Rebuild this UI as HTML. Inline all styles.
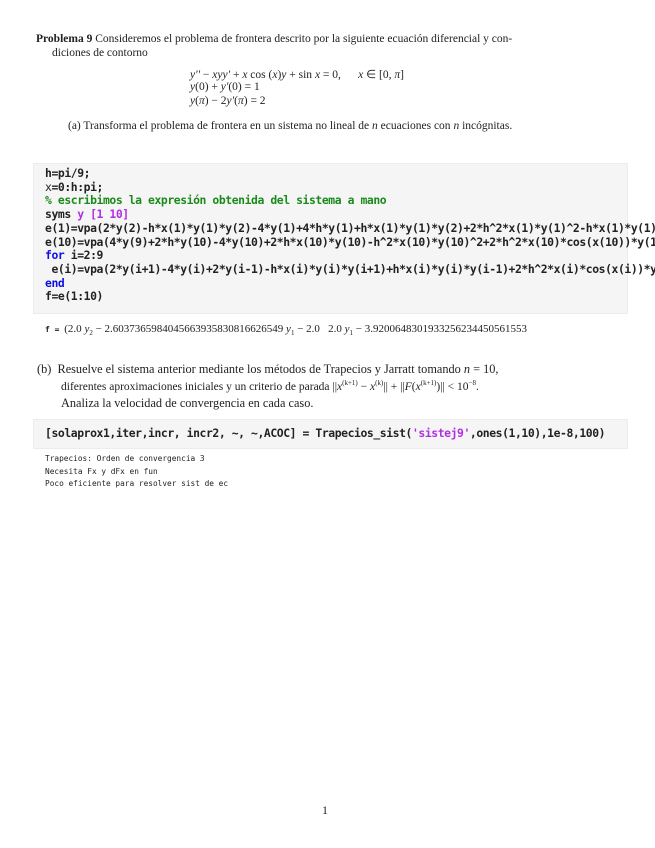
<!DOCTYPE html>
<html><head><meta charset="utf-8"><style>
body{margin:0;width:655px;height:848px;background:#fff;position:relative;overflow:hidden;font-family:"Liberation Serif",serif;color:#222}
.a{position:absolute;white-space:nowrap}
.s{font-size:11.5px}
.box{position:absolute;background:#f5f5f5;border:1px solid #ececec}
.c{font-family:"DejaVu Sans Mono","Liberation Mono",monospace;font-weight:bold;font-size:11.4px;color:#222;letter-spacing:-0.42px}
.o{font-family:"DejaVu Sans Mono",monospace;font-size:7.8px;color:#222}
.g{color:#1a8a1a}.p{color:#b030e0}.b{color:#1010e0}
i{font-style:italic}
</style></head><body>
<div class="a s" style="left:36px;top:33px"><b>Problema 9</b> Consideremos el problema de frontera descrito por la siguiente ecuación diferencial y con-</div>
<div class="a s" style="left:52px;top:47px">diciones de contorno</div>
<div class="a s" style="left:190px;top:67px"><i>y''</i> − <i>xyy'</i> + <i>x</i> cos (<i>x</i>)<i>y</i> + sin <i>x</i> = 0, &nbsp;&nbsp;&nbsp;&nbsp;&nbsp;<i>x</i> ∈ [0, <i>π</i>]</div>
<div class="a s" style="left:190px;top:81px"><i>y</i>(0) + <i>y'</i>(0) = 1</div>
<div class="a s" style="left:190px;top:95px"><i>y</i>(<i>π</i>) − 2<i>y'</i>(<i>π</i>) = 2</div>
<div class="a s" style="left:68px;top:120px">(a) Transforma el problema de frontera en un sistema no lineal de <i>n</i> ecuaciones con <i>n</i> incógnitas.</div>

<div class="box" style="left:33px;top:163px;width:593px;height:149px"></div>
<div class="a c" style="left:45px;top:167px;line-height:13.7px">h=pi/9;<br><span style="font-weight:normal">x</span>=0:h:pi;<br><span class="g">% escribimos la expresión obtenida del sistema a mano</span><br>syms <span class="p">y [1 10]</span><br>e(1)=vpa(2*y(2)-h*x(1)*y(1)*y(2)-4*y(1)+4*h*y(1)+h*x(1)*y(1)*y(2)+2*h^2*x(1)*y(1)^2-h*x(1)*y(1)<br>e(10)=vpa(4*y(9)+2*h*y(10)-4*y(10)+2*h*x(10)*y(10)-h^2*x(10)*y(10)^2+2*h^2*x(10)*cos(x(10))*y(1<br><span class="b">for</span> i=2:9<br>&nbsp;e(i)=vpa(2*y(i+1)-4*y(i)+2*y(i-1)-h*x(i)*y(i)*y(i+1)+h*x(i)*y(i)*y(i-1)+2*h^2*x(i)*cos(x(i))*y<br><span class="b">end</span><br>f=e(1:10)</div>

<div class="a" style="left:45px;top:323px;font-size:11px"><span class="o" style="font-weight:bold;font-size:8px">f = </span> (2.0 <i>y</i><sub style="font-size:7px">2</sub> − 2.6037365984045663935830816626549 <i>y</i><sub style="font-size:7px">1</sub> − 2.0 &nbsp;&nbsp;2.0 <i>y</i><sub style="font-size:7px">1</sub> − 3.9200648301933256234450561553</div>

<div class="a" style="left:37px;top:362px;font-size:12.3px">(b) &nbsp;Resuelve el sistema anterior mediante los métodos de Trapecios y Jarratt tomando <i>n</i> = 10,</div>
<div class="a s" style="left:61px;top:379px">diferentes aproximaciones iniciales y un criterio de parada ||<i>x</i><sup style="font-size:7px">(k+1)</sup> − <i>x</i><sup style="font-size:7px">(k)</sup>|| + ||<i>F</i>(<i>x</i><sup style="font-size:7px">(k+1)</sup>)|| &lt; 10<sup style="font-size:7px">−8</sup>.</div>
<div class="a" style="left:61px;top:396px;font-size:12.3px">Analiza la velocidad de convergencia en cada caso.</div>

<div class="box" style="left:33px;top:419px;width:593px;height:28px"></div>
<div class="a c" style="left:45px;top:426px">[solaprox1,iter,incr, incr2, ~, ~,ACOC] = Trapecios_sist(<span class="p">'sistej9'</span>,ones(1,10),1e-8,100)</div>

<div class="a o" style="left:45px;top:453px;line-height:12.5px">Trapecios: Orden de convergencia 3<br>Necesita Fx y dFx en fun<br>Poco eficiente para resolver sist de ec</div>

<div class="a" style="left:322px;top:803px;font-size:12px">1</div>
</body></html>
